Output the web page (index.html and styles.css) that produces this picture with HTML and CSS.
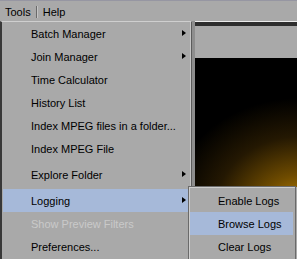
FILE: index.html
```html
<!DOCTYPE html>
<html lang="en">
<head>
  <meta charset="UTF-8" />
  <meta name="viewport" content="width=device-width, initial-scale=1" />
  <title>Tools menu</title>
  <link rel="stylesheet" href="styles.css">
</head>
<body>
  <div class="menubar">
    <span class="mb-item">Tools</span>
    <span class="mb-sep"></span>
    <span class="mb-item">Help</span>
  </div>

  <div class="workspace">
    <div class="toolbar-line"></div>
    <div class="panel"></div>
    <div class="video"></div>

    <ul class="menu dropdown">
      <li class="item">Batch Manager <i class="arrow"></i></li>
      <li class="item">Join Manager <i class="arrow"></i></li>
      <li class="item">Time Calculator</li>
      <li class="item">History List</li>
      <li class="item">Index MPEG files in a folder...</li>
      <li class="item">Index MPEG File</li>
      <li class="item gap">Explore Folder <i class="arrow"></i></li>
      <li class="item gap active">Logging <i class="arrow"></i></li>
      <li class="item disabled">Show Preview Filters</li>
      <li class="item">Preferences...</li>
    </ul>

    <ul class="menu submenu">
      <li class="item">Enable Logs</li>
      <li class="item active">Browse Logs</li>
      <li class="item">Clear Logs</li>
    </ul>
  </div>
</body>
</html>
```

FILE: styles.css
```css
body {
  margin: 0;
  width: 297px;
  height: 259px;
  overflow: hidden;
  background-color: #a9a9a9;
  font-family: "Liberation Sans", Arial, sans-serif;
  font-size: 11px;
  color: #000;
}
.menubar {
  height: 21px;
  border-top: 1px solid #9696a2;
  box-sizing: border-box;
  display: flex;
  align-items: center;
  padding-left: 5px;
}
.mb-item {
  padding-top: 2px;
}
.mb-sep {
  width: 1px;
  height: 12px;
  margin: 2px 5px 0 5px;
  background-color: #6a6a6a;
  border-right: 1px solid #c4c4c4;
}
.workspace {
  position: relative;
  height: 238px;
}
.toolbar-line {
  height: 4px;
  border-top: 1px solid #ececec;
  background-color: #2e2e2e;
}
.panel {
  height: 32px;
}
.video {
  height: 129px;
  background: radial-gradient(ellipse 130px 110px at 300px 150px, #c08400 0, #6e4b00 30%, #241802 65%, #000 100%);
}
.menu {
  list-style: none;
  margin: 0;
  position: absolute;
  background-color: #a9a9a9;
  box-sizing: border-box;
}
.dropdown {
  left: 0;
  top: 0;
  width: 192px;
  height: 240px;
  padding: 0 1px;
  border-left: 2px solid #383838;
  border-top: 1px solid #cfcfcf;
  border-right: 1px solid #5c5c5c;
  box-shadow: inset -1px 0 #c6c6c6, 3px 0 #8e8e8e;
}
.submenu {
  left: 188px;
  top: 165px;
  width: 108px;
  height: 80px;
  padding: 2px 2px 0 1px;
  border: 1px solid #6a6a6a;
  box-shadow: inset 1px 1px #cecece;
}
.item {
  height: 23px;
  display: flex;
  align-items: center;
  padding-left: 28px;
  padding-right: 4px;
  white-space: nowrap;
}
.item.gap {
  margin-top: 3px;
}
.item.active {
  background-color: #a6b9d9;
}
.item.disabled {
  color: #c9c9c9;
}
.arrow {
  margin-left: auto;
  width: 0;
  height: 0;
  border-left: 4px solid #000;
  border-top: 3.5px solid transparent;
  border-bottom: 3.5px solid transparent;
  margin-top: -2px;
}
```
